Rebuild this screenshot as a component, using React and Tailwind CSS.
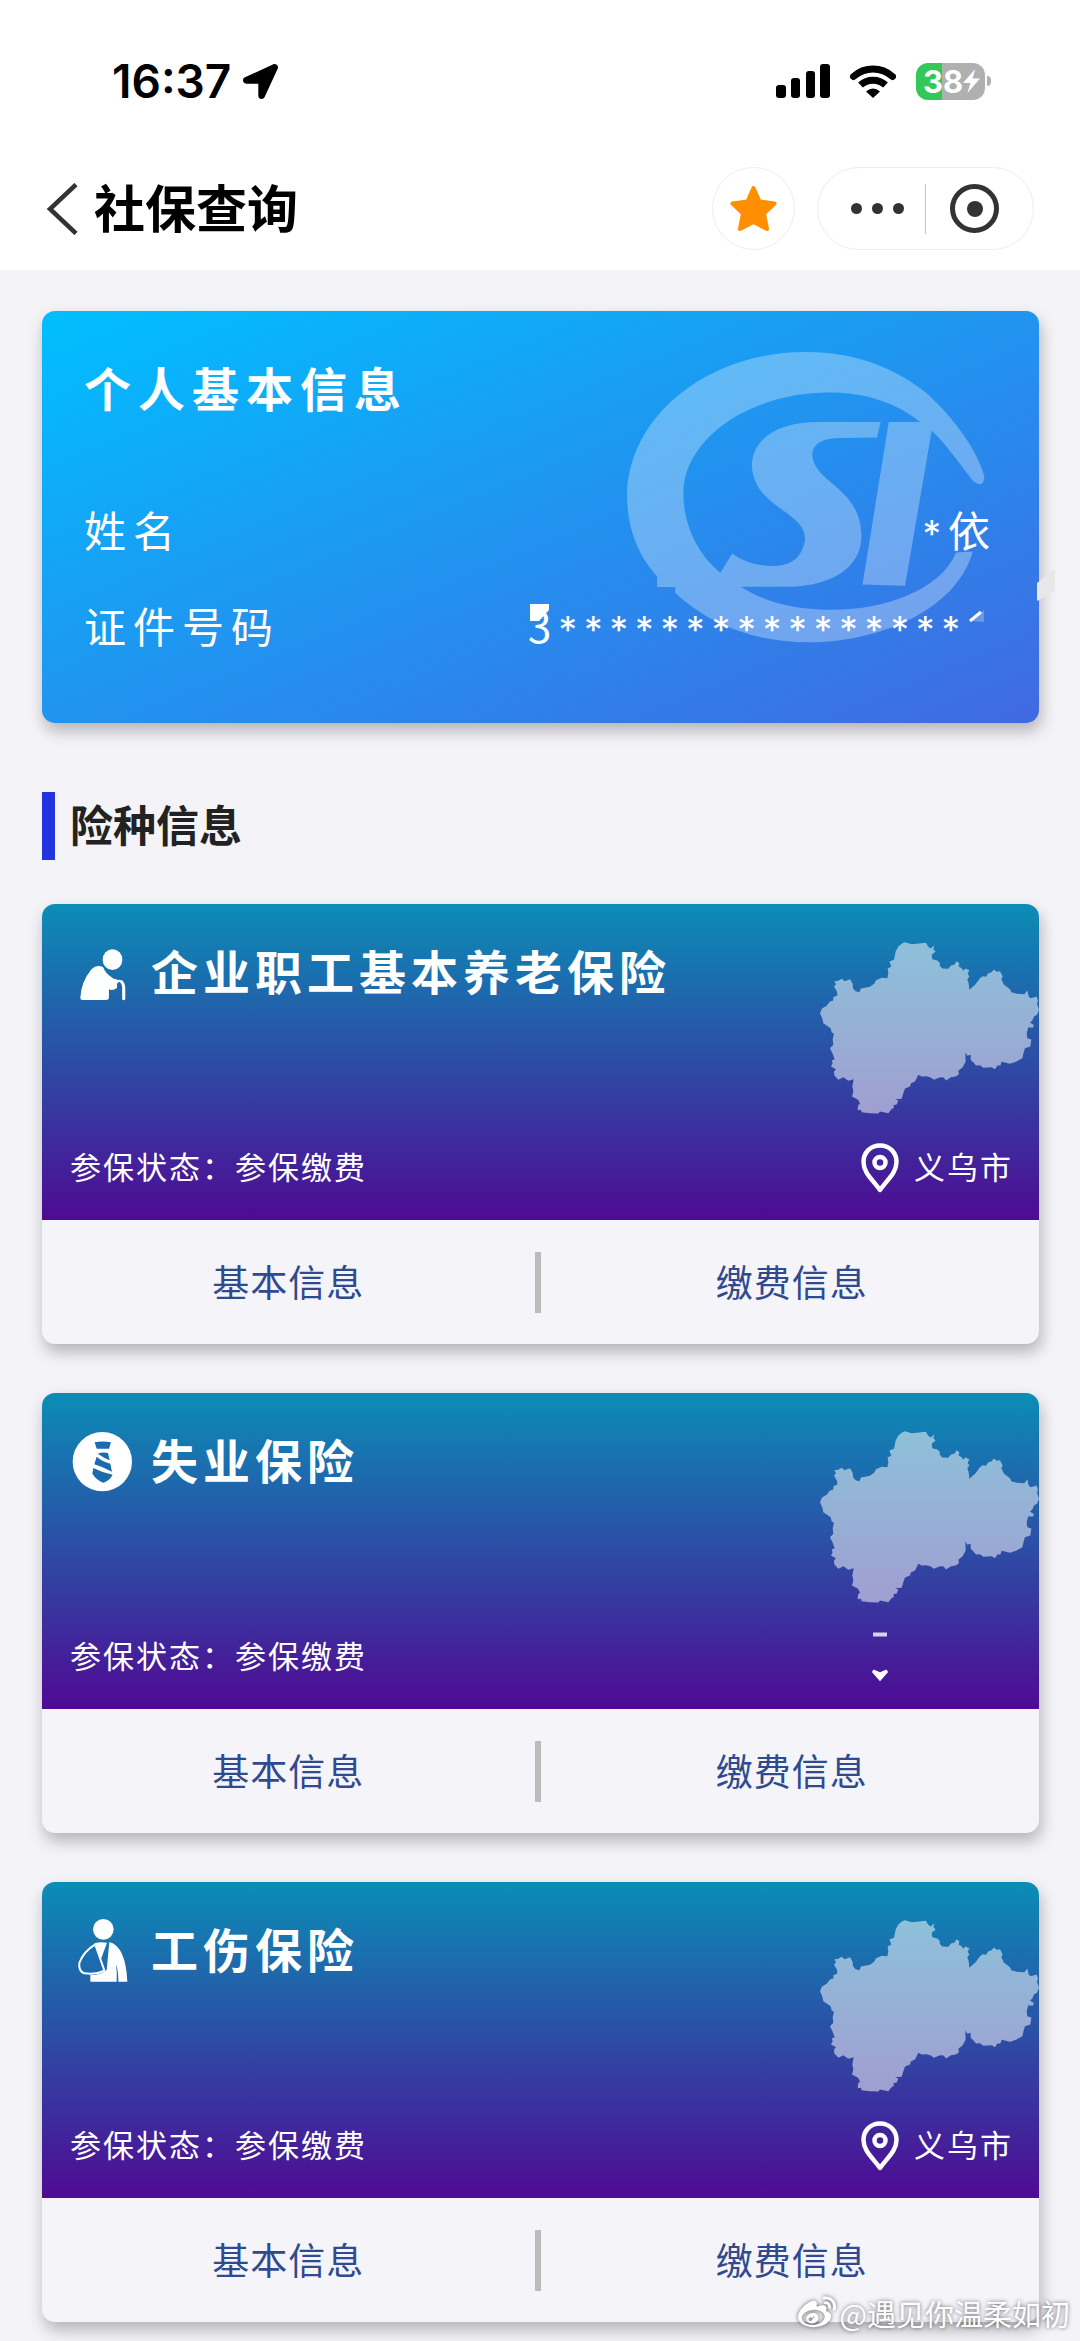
import { FaLocationArrow, FaWeibo } from "react-icons/fa";

function StatusBar() {
  return (
    <div className="flex h-[42px] items-center justify-between pl-[112px] pr-[89px] font-['Inter',sans-serif] text-black">
      <div className="flex items-center gap-3">
        <span className="text-[46px] font-semibold leading-[42px]">16:37</span>
        <FaLocationArrow className="size-[35px]" aria-hidden="true" />
      </div>
      <div className="flex items-center">
        <svg className="h-[34px] w-[54px]" viewBox="0 0 54 34" aria-hidden="true">
          <rect x="0" y="21" width="10" height="13" rx="3" />
          <rect x="15" y="14" width="9" height="20" rx="3" />
          <rect x="30" y="7" width="9" height="27" rx="3" />
          <rect x="44" y="0" width="10" height="34" rx="3" />
        </svg>
        <svg className="ml-5 h-[33px] w-[46px]" viewBox="0 0 46 33" fill="none" stroke="#000" aria-hidden="true">
          <path d="M3.5 11.5A29 29 0 0 1 42.5 11.5" strokeWidth="7" strokeLinecap="round" />
          <path d="M10.500 20A18.500 18.500 0 0 1 35.500 20" strokeWidth="7" />
          <path d="M16 26.500Q23 20.500 30 26.500L23 33Z" fill="#000" stroke="none" />
        </svg>
        <div className="ml-5 flex h-[37px] w-[69px] items-center overflow-hidden rounded-xl bg-[linear-gradient(90deg,#34c759_38%,#b0b0b0_38%)] pl-[7px] text-white">
          <span className="text-[31px] font-bold leading-[37px]">38</span>
          <svg className="h-6 w-[17px]" viewBox="1230 210 50 68" preserveAspectRatio="none" fill="#fff" aria-hidden="true">
            <path d="M1266 210L1230 250H1252L1243 278L1280 237H1258Z" />
          </svg>
        </div>
        <div className="ml-0.5 h-[10px] w-1 rounded-r-full bg-[#b0b0b0]" />
      </div>
    </div>
  );
}

function NavBar() {
  return (
    <div className="flex items-center pb-5 pl-[46px] pr-[46px] pt-[65px]">
      <button type="button" aria-label="返回" className="mr-4">
        <svg className="h-[52px] w-8" viewBox="0 0 32 52" fill="none" stroke="#333" strokeWidth="4.500">
          <path d="M30 1.500L4 26L30 50.500" />
        </svg>
      </button>
      <h1 className="flex-1 pb-1.5 text-[51px] font-bold leading-[60px] text-black">社保查询</h1>
      <button type="button" aria-label="收藏" className="mr-[22px] flex size-[83px] items-center justify-center rounded-full border border-[#ededed]">
        <svg className="h-[47px] w-[47px]" viewBox="0 0 47 47" fill="#ff8f00" stroke="#ff8f00" strokeWidth="4" strokeLinejoin="round">
          <path d="M23.500 3L29.500 16.500L44.500 18.500L34 28.500L37 44L23.500 37L10 44L13 28.500L2.500 18.500L17.500 16.500Z" />
        </svg>
      </button>
      <div className="flex h-[83px] w-[217px] items-center rounded-full border border-[#ededed]">
        <button type="button" aria-label="更多" className="flex h-full w-[107px] items-center justify-end gap-[10px] pr-[21px]">
          <span className="size-[11px] rounded-full bg-[#333]" />
          <span className="size-[11px] rounded-full bg-[#333]" />
          <span className="size-[11px] rounded-full bg-[#333]" />
        </button>
        <span className="h-[50px] w-px bg-[#c4c4c4]" />
        <button type="button" aria-label="关闭" className="flex h-full flex-1 items-center pl-6">
          <span className="flex size-[49px] items-center justify-center rounded-full border-[5px] border-[#333]">
            <span className="size-4 rounded-full bg-[#333]" />
          </span>
        </button>
      </div>
    </div>
  );
}

function SocialInsuranceLogo() {
  return (
    <svg className="absolute right-[54px] top-[39px] h-[293px] w-[359px]" viewBox="340 180 970 880" preserveAspectRatio="none" fill="#fff" fillOpacity="0.31" aria-hidden="true">
      <path d="M1297 583Q1308 582 1308 560C1290 480 1222 380 1150 308C1060 228 950 185 825 186C560 186 343 380 343 620C343 720 375 800 424 860V892H473V910C560 1000 680 1058 835 1058C1010 1058 1230 970 1277 785L1232 788C1190 900 1040 960 900 960C800 960 720 940 650 891H790C900 885 976 830 976 740C976 590 843 580 843 490Q848 445 920 444L1018 443L1028 396H860C745 396 680 450 680 530C690 660 824 660 824 750Q812 828 740 829Q670 828 627 791L595 849C530 790 495 700 495 610C495 450 670 308 890 308C990 308 1070 340 1135 396H1050L979 884L1094 888L1166 422C1210 470 1240 520 1275 570Q1285 583 1297 583Z" />
    </svg>
  );
}

function Mask({ children }) {
  return (
    <span className="font-['Inter',sans-serif] text-[37px] leading-none tracking-[7px]">{children}</span>
  );
}

function PersonCard() {
  return (
    <section className="relative rounded-[13px] bg-linear-to-br/srgb from-[#00bfff] to-[#4169e1] px-[42px] pb-[68px] pt-[46px] text-white shadow-[2px_8px_16px_rgba(0,0,0,0.26)]">
      <SocialInsuranceLogo />
      <svg className="absolute -right-4 top-[258px] h-8 w-[18px]" viewBox="0 0 18 32" fill="#e8e8eb" aria-hidden="true">
        <path d="M0 14L18 0V22L0 32Z" />
      </svg>
      <div className="relative">
        <h2 className="text-[47px] font-bold leading-[60px] tracking-[7px]">个人基本信息</h2>
        <dl className="mt-[82px] flex flex-col gap-9 text-[42px] leading-[60px] tracking-[7px]">
          <div className="flex h-[60px] justify-between">
            <dt>姓名</dt>
            <dd><Mask>*</Mask>依</dd>
          </div>
          <div className="flex h-[60px] justify-between">
            <dt>证件号码</dt>
            <dd className="relative pr-[30px]">
              3<Mask>****************</Mask>
              <svg className="absolute left-0.5 top-[9px] h-[17px] w-[19px]" viewBox="0 0 19 17" fill="#fff" aria-hidden="true">
                <path d="M0 0H19V6L9 17H0Z" />
              </svg>
              <svg className="absolute right-[13px] top-[15px] h-3 w-[15px]" viewBox="0 0 15 12" aria-hidden="true">
                <path d="M2 11L15 0V12Z" fill="#fff" fillOpacity="0.25" />
                <path d="M1 11L12 2" stroke="#fff" strokeWidth="3" />
              </svg>
            </dd>
          </div>
        </dl>
      </div>
    </section>
  );
}

function ElderIcon() {
  return (
    <svg className="size-16" viewBox="159 543 143 192" preserveAspectRatio="none" fill="#fff" aria-hidden="true">
      <ellipse cx="254" cy="599" rx="22" ry="31" />
      <path d="M182 714Q184 665 207 628Q219 612 233 622Q238 640 252 652Q258 660 264 657V684Q254 693 246 688V712Q246 720 240 720H187Q182 720 182 714Z" />
      <path d="M262 668Q267 660 273 664Q279 670 279 685V717" fill="none" stroke="#fff" strokeWidth="7" strokeLinecap="round" />
    </svg>
  );
}

function TieIcon() {
  return (
    <svg className="size-16" viewBox="123 151 192 192" fill="#1b6cae" aria-hidden="true">
      <circle cx="220" cy="246" r="89" fill="#fff" />
      <path d="M197 188Q221 183 246 188L240 207H203Z" />
      <path d="M206 222Q221 216 237 220L242 242Q225 235 206 222Z" />
      <path d="M203 231Q220 246 244 252L249 276Q222 262 196 254Z" />
      <path d="M193 265Q222 280 251 285Q240 305 222 309Q203 302 190 282Z" />
    </svg>
  );
}

function InjuryIcon() {
  return (
    <svg className="size-16" viewBox="123 120 192 192" fill="#fff" aria-hidden="true">
      <circle cx="223" cy="151" r="31" />
      <path d="M196 193Q215 187 234 191L216 240Z" />
      <path d="M198 197Q164 217 151 252Q148 277 166 283Q200 288 226 274L200 200" fill="none" stroke="#fff" strokeWidth="6" strokeLinejoin="round" />
      <path d="M241 189Q290 202 295 308H268Q268 275 261 256Q265 285 263 308H184V288Q212 289 233 273Z" />
    </svg>
  );
}

function CityMap() {
  return (
    <svg className="absolute right-0 top-[38px] h-[172px] w-[219px]" viewBox="120 127 657 515" fill="#fff" fillOpacity="0.52" aria-hidden="true">
      <path d="M375 127L395 133L438 129L444 140L452 146L463 136L460 148L467 155L455 165L457 178L472 182L480 190L479 198L487 206L505 207L513 197L523 195L530 184L538 190L536 200L545 205L550 213L556 206L568 211L563 222L568 230L562 238L566 250L568 270L586 254L600 235L608 229L618 231L625 220L634 218L642 209L650 216L660 214L668 230L664 238L672 255L690 268L694 277L710 282L733 283L742 272L746 290L752 295L770 290L774 303L771 312L777 330L771 345L762 350L757 362L750 368L762 376L758 384L745 382L740 400L742 415L754 419L751 440L735 445L731 458L727 475L708 486L690 492L665 486L661 497L652 497L645 508L635 502L610 504L600 496L588 497L580 487L572 480L572 465L562 468L556 458L557 485L548 502L535 513L537 523L527 530L513 532L498 542L491 533L480 532L462 540L452 533L440 529L425 530L415 525L405 545L393 550L390 560L375 566L370 580L365 597L345 598L355 602L350 614L340 616L342 623L333 630L325 640L300 635L295 641L270 640L245 637L243 630L233 631L234 618L240 611L234 600L216 590L220 575L217 560L221 538L205 543L190 532L175 540L163 527L162 515L168 508L153 500L158 490L155 482L164 478L158 462L150 445L160 435L158 418L162 402L155 398L152 385L140 377L130 370L127 356L120 340L126 326L140 318L150 305L160 302L160 292L172 287L171 276L162 260L168 253L163 244L175 243L185 237L194 244L210 238L218 252L219 265L227 274L238 277L243 266L270 261L283 251L288 241L306 234L322 235L325 220L323 206L334 200L328 185L342 180L347 155L355 140L367 130Z" />
    </svg>
  );
}

function PinIcon() {
  return (
    <svg className="h-[50px] w-[38px]" viewBox="0 0 38 50" fill="none" stroke="#fff" strokeWidth="4.500" strokeLinejoin="round" aria-hidden="true">
      <path d="M19 2.500C9 2.500 2.500 10 2.500 19C2.500 30 12 37 19 47C26 37 35.500 30 35.500 19C35.500 10 29 2.500 19 2.500Z" />
      <circle cx="19" cy="19.500" r="5.500" />
    </svg>
  );
}

// Only the cap and the tip of the pin stay visible when the city is hidden.
function HiddenPin() {
  return (
    <svg className="h-[50px] w-[38px]" viewBox="0 0 38 50" fill="none" stroke="#fff" aria-hidden="true">
      <path d="M12 2.500H26" strokeWidth="4" strokeOpacity="0.8" />
      <path d="M12 39L19 47L26 39L19 42Z" fill="#fff" strokeWidth="3" />
    </svg>
  );
}

function InsuranceCard({ Icon, name, city }) {
  return (
    <article className="overflow-hidden rounded-[13px] bg-[#f4f4f9] shadow-[2px_8px_16px_rgba(0,0,0,0.26)]">
      <div className="relative bg-linear-to-b/srgb from-[#0b8db6] to-[#4f0a94] pb-[27px] pl-7 pr-[26px] pt-[37px] text-white">
        <CityMap />
        <div className="flex items-center gap-[17px]">
          <Icon />
          <h3 className="pb-1.5 text-[47px] font-bold leading-[58px] tracking-[5px]">{name}</h3>
        </div>
        <div className="mt-[138px] flex h-[50px] items-center justify-between text-[31px] leading-[46px] tracking-[2px]">
          <p className="pb-1">参保状态：参保缴费</p>
          <div className={city ? "flex items-center gap-[15px]" : "mr-[114px] flex items-center"}>
            {city ? <PinIcon /> : <HiddenPin />}
            {city && <span className="pb-1">{city}</span>}
          </div>
        </div>
      </div>
      <div className="flex h-[124px] items-center text-[37px] leading-[60px] tracking-[1px] text-[#2f4a8f]">
        <a href="#basic" className="w-[49.4%] pb-0.5 text-center">基本信息</a>
        <span className="h-[61px] w-1.5 bg-[#bbb]" />
        <a href="#payment" className="flex-1 pb-0.5 pl-1 text-center">缴费信息</a>
      </div>
    </article>
  );
}

const insurances = [
  { name: "企业职工基本养老保险", Icon: ElderIcon, city: "义乌市" },
  { name: "失业保险", Icon: TieIcon, city: "" },
  { name: "工伤保险", Icon: InjuryIcon, city: "义乌市" },
];

export default function App() {
  return (
    <div lang="zh-CN" className="relative min-h-screen overflow-hidden bg-[#f3f3f8] font-['Noto_Sans_CJK_SC',sans-serif]">
      <header className="bg-white pt-[60px]">
        <StatusBar />
        <NavBar />
      </header>
      <main className="pb-[19px] pl-[42px] pr-[41px] pt-[41px]">
        <PersonCard />
        <div className="mt-[69px] flex h-[68px] items-center gap-[15px]">
          <span className="h-full w-[13px] bg-[#2433e0]" />
          <h2 className="pb-1.5 text-[43px] font-bold leading-[60px] text-[#222]">险种信息</h2>
        </div>
        <div className="mt-11 flex flex-col gap-[49px]">
          {insurances.map((item) => (
            <InsuranceCard key={item.name} {...item} />
          ))}
        </div>
      </main>
      <div className="absolute bottom-2 right-[10px] flex items-center gap-1 text-[29px] leading-[40px] text-white [text-shadow:0_0_4px_rgba(0,0,0,0.6)]">
        <FaWeibo className="size-[38px] drop-shadow-[0_0_2px_rgba(0,0,0,0.6)]" aria-hidden="true" />
        <span>@遇见你温柔如初</span>
      </div>
    </div>
  );
}
